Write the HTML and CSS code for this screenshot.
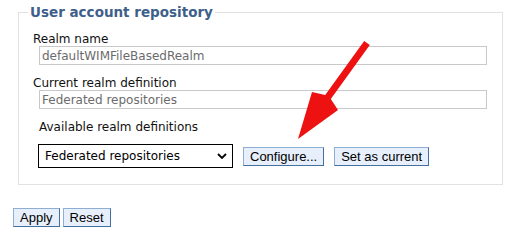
FILE: index.html
```html
<!DOCTYPE html>
<html lang="en">
<head>
  <meta charset="UTF-8">
  <title>User account repository</title>
  <link rel="stylesheet" href="styles.css">
</head>
<body>

<form class="page">
  <fieldset class="repo">
    <legend>User account repository</legend>

    <label class="field-label" for="realmName">Realm name</label>
    <input id="realmName" class="field" type="text" value="defaultWIMFileBasedRealm" readonly>

    <label class="field-label" for="currentRealm">Current realm definition</label>
    <input id="currentRealm" class="field" type="text" value="Federated repositories" readonly>

    <div class="available">
      <label class="field-label" for="realmDefs">Available realm definitions</label>
      <div class="select-row">
        <div class="select-wrap">
          <select id="realmDefs">
            <option>Federated repositories</option>
            <option>Local operating system</option>
            <option>Standalone LDAP registry</option>
            <option>Standalone custom registry</option>
          </select>
          <svg class="chevron" width="10" height="6" viewBox="0 0 10 6">
            <path d="M1 1 L5 5 L9 1" fill="none" stroke="#000" stroke-width="1.8"/>
          </svg>
        </div>
        <button type="button" class="btn">Configure...</button>
        <button type="button" class="btn">Set as current</button>
      </div>
    </div>
  </fieldset>

  <div class="actions">
    <button type="submit" class="btn">Apply</button>
    <button type="reset" class="btn">Reset</button>
  </div>
</form>

<svg class="pointer" width="513" height="245" viewBox="0 0 513 245">
  <polygon points="364.2,41 369.8,45 330.8,99 338,110 298,139 312,92 325.2,95" fill="#ee1111"/>
</svg>

</body>
</html>
```

FILE: styles.css
```css
body {
  margin: 0;
  background: #fff;
  font-family: "DejaVu Sans", Verdana, sans-serif;
  font-size: 12px;
  color: #111;
}

.page {
  padding: 4px 10px 0 18px;
}

.repo {
  margin: 0;
  padding: 12px 15px 16px 14px;
  border: 1px solid #e2e2e2;
}

.repo legend {
  margin-left: -5px;
  padding: 0 2px;
  color: #3e5f8a;
  font-weight: bold;
  font-size: 13.5px;
  line-height: 16px;
}

.field-label {
  display: block;
  line-height: 14px;
}

.field {
  display: block;
  box-sizing: border-box;
  width: 448px;
  height: 19px;
  margin: 0 0 11px 6px;
  padding: 0 2px;
  border: 1px solid #c9c9c9;
  font-family: "DejaVu Sans", Verdana, sans-serif;
  font-size: 12px;
  color: #6b6b6b;
  background: #fff;
  outline: none;
}

.available {
  padding-left: 6px;
}

.select-row {
  display: flex;
  align-items: center;
  gap: 10px;
  margin-top: 10px;
}

.select-wrap {
  position: relative;
  margin-left: -1px;
}

.select-wrap select {
  display: block;
  appearance: none;
  box-sizing: border-box;
  width: 195px;
  height: 24px;
  padding: 0 0 0 6px;
  border: 1px solid #000;
  border-radius: 0;
  background: #fff;
  font-family: "DejaVu Sans", Verdana, sans-serif;
  font-size: 12px;
  color: #000;
}

.chevron {
  position: absolute;
  right: 6px;
  top: 9px;
  pointer-events: none;
}

.btn {
  box-sizing: border-box;
  height: 19px;
  padding: 0 6px;
  border: 1px solid;
  border-color: #8eaed3 #44709f #44709f #8eaed3;
  background: #e6effb;
  font-family: "Liberation Sans", Arial, sans-serif;
  font-size: 13px;
  color: #000;
  cursor: pointer;
}

.actions {
  display: flex;
  gap: 3px;
  margin-top: 23px;
  margin-left: -5px;
}

.pointer {
  position: absolute;
  left: 0;
  top: 0;
  pointer-events: none;
}
```
